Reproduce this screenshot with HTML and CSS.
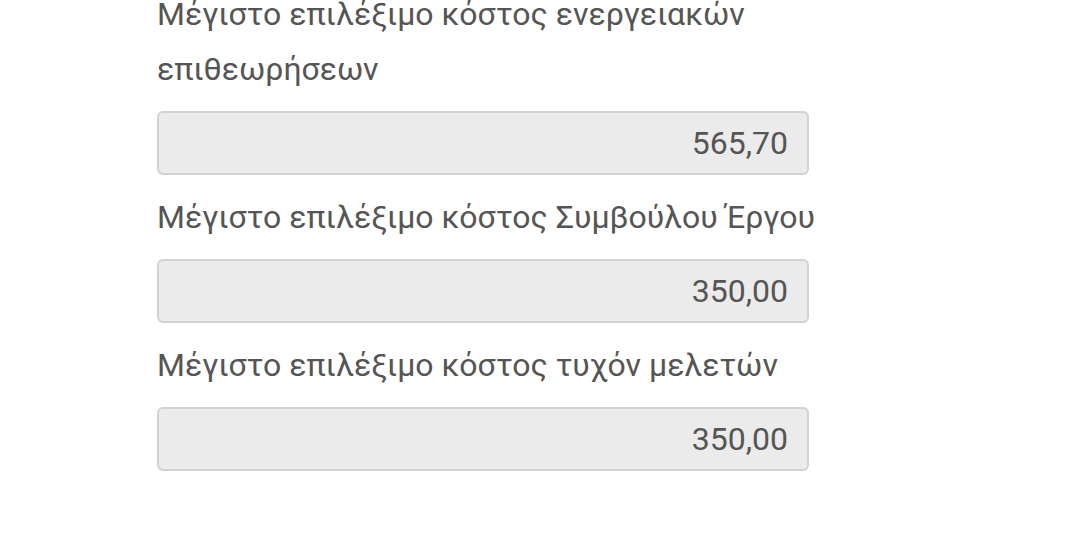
FILE: index.html
```html
<!DOCTYPE html>
<html lang="el">
<head>
    <meta charset="UTF-8">
    <meta name="viewport" content="width=device-width, initial-scale=1.0">
    <title>Επιλέξιμο κόστος</title>
    <link rel="stylesheet" href="styles.css">
</head>
<body>
    <form class="costs">
        <div class="field">
            <label for="inspections">Μέγιστο επιλέξιμο κόστος ενεργειακών επιθεωρήσεων</label>
            <input type="text" id="inspections" value="565,70" readonly>
        </div>

        <div class="field">
            <label for="consultant">Μέγιστο επιλέξιμο κόστος Συμβούλου Έργου</label>
            <input type="text" id="consultant" value="350,00" readonly>
        </div>

        <div class="field">
            <label for="studies">Μέγιστο επιλέξιμο κόστος τυχόν μελετών</label>
            <input type="text" id="studies" value="350,00" readonly>
        </div>
    </form>
</body>
</html>
```

FILE: styles.css
```css
body {
    margin: 0;
    background-color: #fff;
    font-family: 'Roboto', 'Noto Sans', sans-serif;
    color: #555;
}

.costs {
    width: 720px;
    margin-left: 157px;
    margin-top: -13px;
}

.field {
    margin-bottom: 15px;
}

.field label {
    display: block;
    font-size: 32px;
    line-height: 55px;
    margin-bottom: 14px;
}

.field input {
    display: block;
    width: 652px;
    height: 64px;
    box-sizing: border-box;
    padding: 0 19px 0 19px;
    font-family: inherit;
    font-size: 32px;
    color: #555;
    text-align: right;
    background-color: #ebebeb;
    border: 2px solid #d2d2d2;
    border-radius: 6px;
    outline: none;
}
```
